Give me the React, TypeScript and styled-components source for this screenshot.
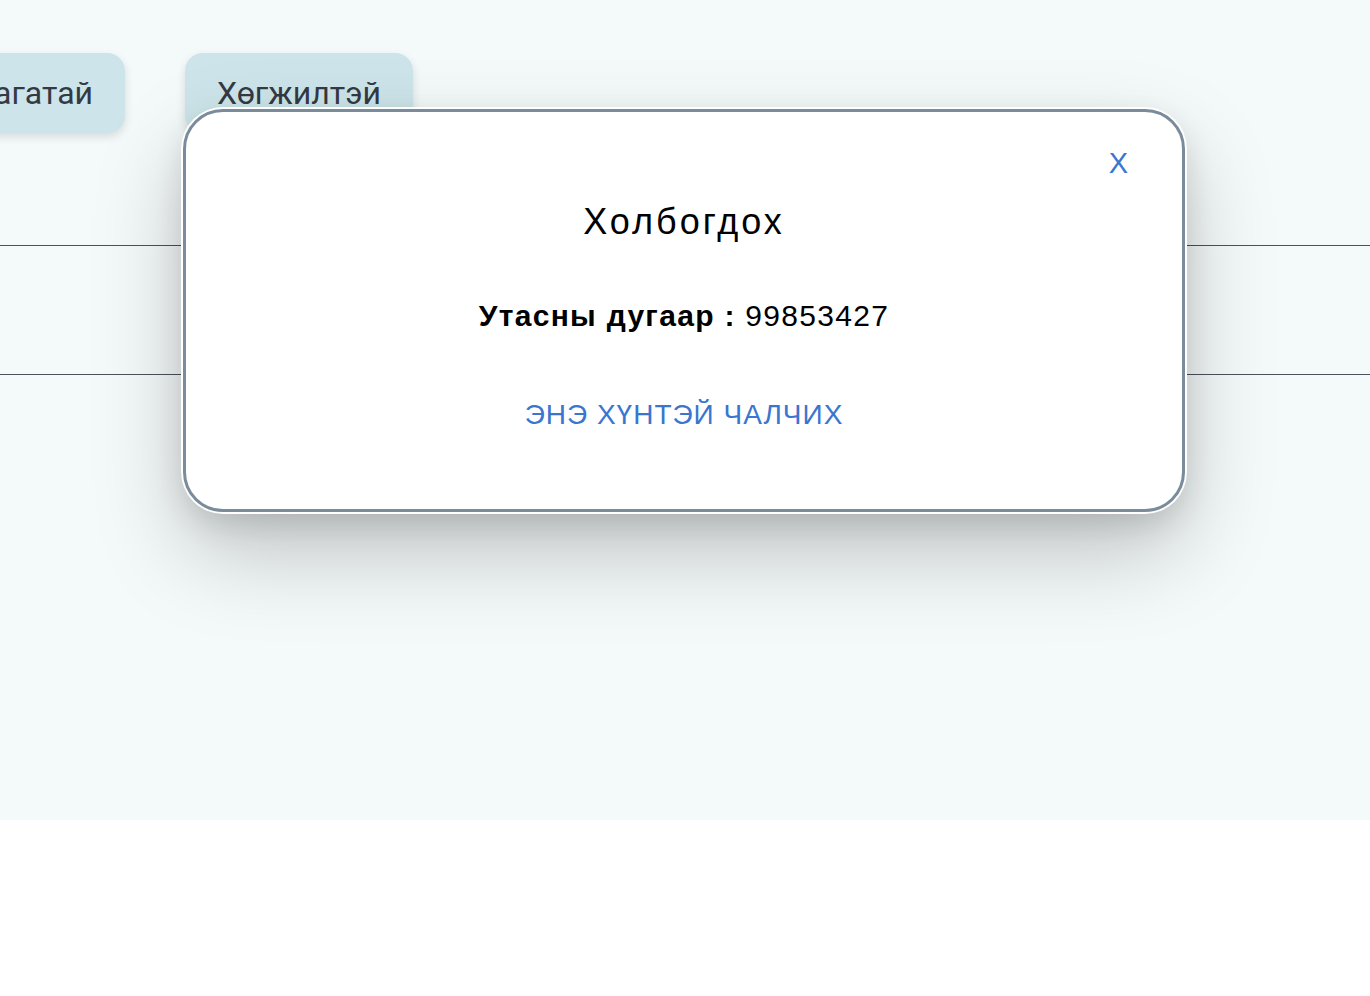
import React from "react";
import styled, { createGlobalStyle } from "styled-components";

const Global = createGlobalStyle`
  html, body { margin: 0; padding: 0; background: #ffffff; overflow: hidden; }
  body { font-family: "Liberation Sans", Arial, sans-serif; }
`;

const Page = styled.div`
  position: relative;
  width: 1370px;
  height: 996px;
  background: #ffffff;
`;

const Stage = styled.div`
  height: 820px;
  background: #f4f9f9;
  display: flex;
  flex-direction: column;
`;

const TabRow = styled.div`
  display: flex;
  gap: 60px;
  padding-top: 53px;
  margin-left: -38px;
`;

const Tab = styled.div`
  height: 80px;
  box-sizing: border-box;
  padding: 0 32px;
  display: flex;
  align-items: center;
  background: #cde5ea;
  border-radius: 18px;
  box-shadow: 0 4px 10px rgba(0, 0, 0, 0.12);
  font-family: Roboto, "Noto Sans", sans-serif;
  font-size: 32px;
  color: #343a44;
`;

const Rule = styled.div<{ $top: number }>`
  height: 1px;
  background: #4a5260;
  margin-top: ${(p) => p.$top}px;
`;

const Modal = styled.div`
  position: absolute;
  top: 109px;
  left: 183px;
  width: 1002px;
  height: 403px;
  box-sizing: border-box;
  background: #ffffff;
  border: 3px solid #7a8b9b;
  border-radius: 40px;
  box-shadow: 0 0 0 2px #ffffff, 0 40px 90px rgba(0, 0, 0, 0.22),
    0 12px 30px rgba(0, 0, 0, 0.12);
  display: flex;
  flex-direction: column;
  align-items: center;
  font-family: "Liberation Sans", Arial, sans-serif;
`;

const CloseRow = styled.div`
  align-self: stretch;
  display: flex;
  justify-content: flex-end;
  padding: 35px 54px 0 0;
`;

const Close = styled.span`
  font-size: 29px;
  line-height: 32px;
  color: #3a75d0;
  cursor: pointer;
`;

const Title = styled.h2`
  margin: 22px 0 0;
  font-size: 36px;
  line-height: 41px;
  font-weight: 400;
  letter-spacing: 3px;
  color: #000000;
`;

const Phone = styled.p`
  margin: 58px 0 0;
  font-size: 30px;
  line-height: 32px;
  letter-spacing: 1.3px;
  color: #000000;
`;

const Label = styled.strong`
  font-weight: 700;
`;

const ChatLink = styled.a`
  margin-top: 67px;
  font-size: 28px;
  line-height: 32px;
  letter-spacing: 1px;
  color: #3a75d0;
  text-transform: uppercase;
  text-decoration: none;
  cursor: pointer;
`;

export default function App() {
  return (
    <Page>
      <Global />
      <Stage>
        <TabRow>
          <Tab>агатай</Tab>
          <Tab>Хөгжилтэй</Tab>
        </TabRow>
        <Rule $top={112} />
        <Rule $top={128} />
      </Stage>
      <Modal>
        <CloseRow>
          <Close>X</Close>
        </CloseRow>
        <Title>Холбогдох</Title>
        <Phone>
          <Label>Утасны дугаар :</Label> 99853427
        </Phone>
        <ChatLink>Энэ хүнтэй чалчих</ChatLink>
      </Modal>
    </Page>
  );
}
